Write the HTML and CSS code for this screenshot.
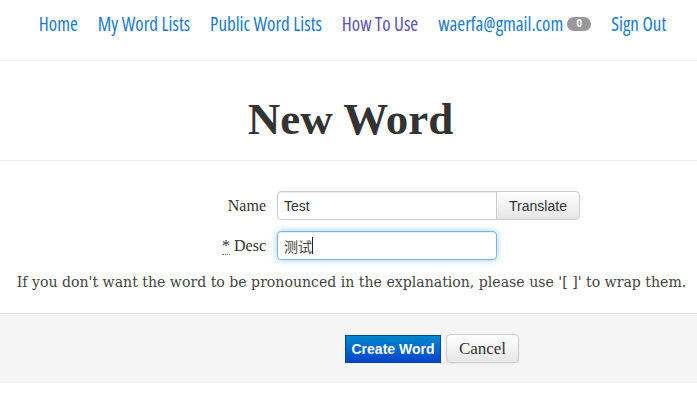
FILE: index.html
```html
<!DOCTYPE html>
<html lang="en">
<head>
    <meta charset="UTF-8">
    <meta name="viewport" content="width=device-width, initial-scale=1.0">
    <title>New Word</title>
    <link rel="stylesheet" href="styles.css">
</head>
<body>
    <header class="topbar">
        <nav class="nav">
            <a class="nav-link" href="#">Home</a>
            <a class="nav-link" href="#">My Word Lists</a>
            <a class="nav-link" href="#">Public Word Lists</a>
            <a class="nav-link visited" href="#">How To Use</a>
            <a class="nav-link" href="#">waerfa@gmail.com <span class="badge">0</span></a>
            <a class="nav-link" href="#">Sign Out</a>
        </nav>
    </header>

    <div class="page-title">
        <h1>New Word</h1>
    </div>

    <form class="word-form">
        <div class="form-row">
            <label class="form-label" for="name">Name</label>
            <div class="input-group">
                <input class="text-input joined" id="name" type="text" value="Test">
                <button class="btn-addon" type="button">Translate</button>
            </div>
        </div>
        <div class="form-row">
            <label class="form-label" for="desc"><abbr title="required">*</abbr> Desc</label>
            <div class="text-input focused"><span class="cjk">测试</span><span class="caret"></span></div>
        </div>
        <p class="help-text">If you don't want the word to be pronounced in the explanation, please use '[ ]' to wrap them.</p>

        <div class="form-actions">
            <button class="btn-primary" type="submit">Create Word</button>
            <button class="btn-cancel" type="button">Cancel</button>
        </div>
    </form>
</body>
</html>
```

FILE: styles.css
```css
:root {
    --link: #1a7bc8;
    --border: #eeeeee;
    --text: #333333;
}

* {
    margin: 0;
    padding: 0;
    box-sizing: border-box;
}

body {
    font-family: "Liberation Serif", serif;
    color: var(--text);
    background: white;
}

.topbar {
    height: 61px;
    border-bottom: 1px solid var(--border);
}

.nav {
    display: flex;
    justify-content: center;
    gap: 20px;
    padding: 12px 0 0 8px;
    white-space: nowrap;
}

.nav-link {
    font-family: "Open Sans", sans-serif;
    font-stretch: 75%;
    font-size: 19px;
    line-height: 24px;
    color: var(--link);
    text-decoration: none;
    display: flex;
    align-items: center;
}

.nav-link.visited {
    color: #5f52aa;
}

.badge {
    display: inline-block;
    margin-left: 4px;
    width: 24px;
    height: 14px;
    border-radius: 7px;
    background: #999999;
    color: white;
    font-family: "Liberation Sans", sans-serif;
    font-size: 10px;
    font-weight: bold;
    line-height: 14px;
    text-align: center;
}

.page-title {
    height: 100px;
    border-bottom: 1px solid var(--border);
    display: flex;
    align-items: center;
    justify-content: center;
    padding-left: 4px;
}

.page-title h1 {
    font-size: 45px;
    font-weight: bold;
    color: var(--text);
    margin-top: 16px;
}

.word-form {
    padding-top: 30px;
}

.form-row {
    display: grid;
    grid-template-columns: 266px auto;
    column-gap: 11px;
    align-items: center;
    margin-bottom: 11px;
}

.form-label {
    text-align: right;
    font-size: 16px;
    color: var(--text);
}

.form-label abbr {
    text-decoration: none;
    border-bottom: 1px dotted #777;
}

.input-group {
    display: flex;
}

.text-input {
    width: 220px;
    height: 29px;
    padding: 4px 6px;
    border: 1px solid #cccccc;
    border-radius: 4px;
    font-family: "Liberation Sans", sans-serif;
    font-size: 14px;
    color: var(--text);
    box-shadow: inset 0 1px 1px rgba(0, 0, 0, 0.075);
    outline: none;
}

.text-input.joined {
    border-radius: 4px 0 0 4px;
}

.text-input.focused {
    width: 220px;
    height: 29px;
    display: flex;
    align-items: center;
    border-color: rgba(82, 168, 236, 0.8);
    box-shadow: inset 0 1px 1px rgba(0, 0, 0, 0.075), 0 0 6px rgba(82, 168, 236, 0.6);
}

.cjk {
    font-family: "Noto Sans CJK SC", sans-serif;
    font-size: 14px;
    color: #444;
}

.caret {
    display: inline-block;
    width: 1px;
    height: 17px;
    background: #222;
}

.btn-addon {
    height: 29px;
    width: 84px;
    margin-left: -1px;
    border: 1px solid #cccccc;
    border-radius: 0 4px 4px 0;
    background: linear-gradient(#ffffff, #e6e6e6);
    font-family: "Liberation Sans", sans-serif;
    font-size: 14px;
    color: var(--text);
}

.help-text {
    text-align: center;
    font-family: "DejaVu Serif", serif;
    font-size: 14.1px;
    line-height: 20px;
    color: #444;
    padding: 1px 0 0 6px;
}

.form-actions {
    margin-top: 21px;
    height: 70px;
    background: #f5f5f5;
    border-top: 1px solid #e5e5e5;
    display: flex;
    align-items: center;
    gap: 5px;
    padding-left: 345px;
}

.btn-primary {
    height: 28px;
    width: 96px;
    border: 1px solid #0044aa;
    background: linear-gradient(#0088cc, #0044cc);
    color: white;
    font-family: "Liberation Sans", sans-serif;
    font-size: 14px;
    font-weight: bold;
}

.btn-cancel {
    height: 29px;
    width: 73px;
    border: 1px solid #cccccc;
    border-radius: 4px;
    background: linear-gradient(#ffffff, #e6e6e6);
    font-family: "Liberation Serif", serif;
    font-size: 17px;
    color: var(--text);
    box-shadow: 0 1px 2px rgba(0, 0, 0, 0.05);
}
```
